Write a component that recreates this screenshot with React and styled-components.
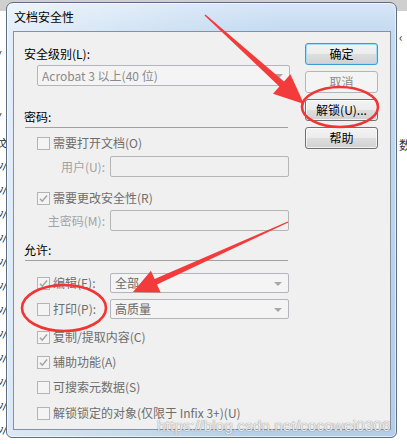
import React from "react";
import styled, { createGlobalStyle } from "styled-components";

const Global = createGlobalStyle`
  html, body { margin: 0; padding: 0; }
  body {
    background: linear-gradient(#cfcfcf 0, #cfcfcf 11px, #ffffff 11px);
    font-family: "Noto Sans CJK SC", "Liberation Sans", sans-serif;
    font-size: 12px;
    color: #000;
  }
`;

const Page = styled.div`
  position: relative;
  width: 407px;
  height: 444px;
  overflow: hidden;
  padding: 2px 0 0 6px;
  box-sizing: border-box;
`;

const Backdrop = styled.div`
  position: absolute;
  left: -3px;
  top: 0;
  width: 10px;
  height: 444px;
  font-family: "DejaVu Serif", serif;
  font-style: italic;
  font-size: 11px;
  color: #222;
`;

const Frag = styled.span`
  position: absolute;
  left: 0;
  line-height: 12px;
`;

const RightFrag = styled.span`
  position: absolute;
  left: 399px;
  top: ${(p) => p.$top}px;
  font-size: 12px;
  color: #333;
  line-height: 14px;
`;

const Window = styled.div`
  position: relative;
  width: 391px;
  height: 436px;
  box-sizing: border-box;
  border: 1px solid #5e6d80;
  border-radius: 7px 7px 6px 6px;
  padding: 0 5px 7px 6px;
  background:
    linear-gradient(90deg, rgba(255, 255, 255, 0.55) 0, rgba(255, 255, 255, 0.15) 45%, rgba(255, 255, 255, 0) 70%),
    linear-gradient(180deg, #d7e6f6 0, #c4dbf2 28px, #b9d3ee 60%, #b3cdea 100%);
  box-shadow: inset 0 0 0 1px rgba(255, 255, 255, 0.6);
  display: flex;
  flex-direction: column;
`;

const TitleBar = styled.div`
  height: 28px;
  display: flex;
  align-items: center;
  padding-left: 1px;
  font-size: 12px;
  color: #000;
  line-height: 16px;
  padding-bottom: 1px;
  box-sizing: border-box;
`;

const Client = styled.div`
  flex: 1;
  border: 1px solid #8591a0;
  background: #f0f0f0;
  display: flex;
  align-items: flex-start;
  padding: 11px 12px 0 10px;
  gap: 15px;
`;

const LeftCol = styled.div`
  width: 266px;
  margin-top: 3px;
  display: flex;
  flex-direction: column;
`;

const RightCol = styled.div`
  width: 73px;
  display: flex;
  flex-direction: column;
  gap: 6px;
`;

const Label = styled.div`
  height: 16px;
  line-height: 16px;
  margin-top: ${(p) => p.$mt || 0}px;
  color: #000;
  white-space: nowrap;
`;

const Separator = styled.div`
  height: 1px;
  width: 263px;
  margin: ${(p) => p.$mt}px 0 0 1px;
  background: #a0a0a0;
`;

const ComboBox = styled.div`
  height: ${(p) => p.$h || 21}px;
  width: ${(p) => p.$w}px;
  margin: ${(p) => p.$mt || 0}px 0 0 ${(p) => p.$ml || 0}px;
  box-sizing: border-box;
  border: 1px solid #b2b6ba;
  border-radius: 2px;
  background: #f4f4f4;
  display: flex;
  align-items: center;
  padding: 0 6px 0 4px;
  color: ${(p) => p.$color || "#8a8a8a"};
  line-height: 16px;
  white-space: nowrap;
`;

const ComboText = styled.span`
  flex: 1;
`;

const Arrow = styled.span`
  width: 0;
  height: 0;
  border-left: 4px solid transparent;
  border-right: 4px solid transparent;
  border-top: 4px solid #a8a8a8;
  margin-top: 1px;
`;

const CheckRow = styled.div`
  height: 16px;
  margin: ${(p) => p.$mt || 0}px 0 0 13px;
  display: flex;
  align-items: center;
  gap: 3px;
  color: #6d6d6d;
  line-height: 16px;
  white-space: nowrap;
`;

const Box = styled.span`
  width: 13px;
  height: 13px;
  box-sizing: border-box;
  border: 1px solid #b4b4b4;
  background: #f4f4f4;
  display: inline-flex;
  align-items: center;
  justify-content: center;
  flex: none;
`;

const FieldRow = styled.div`
  height: ${(p) => p.$h || 21}px;
  margin: ${(p) => p.$mt || 0}px 0 0 13px;
  display: flex;
  align-items: center;
`;

const Lead = styled.div`
  width: 73px;
  display: flex;
  align-items: center;
  justify-content: ${(p) => (p.$right ? "flex-end" : "flex-start")};
  padding-right: ${(p) => (p.$right ? 5 : 0)}px;
  box-sizing: border-box;
  gap: 3px;
  color: ${(p) => (p.$right ? "#a3a3a3" : "#6d6d6d")};
  line-height: 16px;
  white-space: nowrap;
`;

const Input = styled.div`
  width: 179px;
  height: 100%;
  box-sizing: border-box;
  border: 1px solid #b5b5b5;
  border-radius: 2px;
  background: #f0f0f0;
`;

const Button = styled.div`
  height: 22px;
  box-sizing: border-box;
  border-radius: 3px;
  display: flex;
  align-items: center;
  justify-content: center;
  line-height: 16px;
  font-size: 12px;
  border: 1px solid ${(p) => (p.$variant === "default" ? "#3b9ad8" : p.$variant === "disabled" ? "#b3b7ba" : "#707070")};
  color: ${(p) => (p.$variant === "disabled" ? "#8b8b8b" : "#000")};
  background: ${(p) =>
    p.$variant === "disabled"
      ? "#f4f4f4"
      : "linear-gradient(180deg, #f3f3f3 0, #ececec 48%, #dedede 52%, #d1d1d1 100%)"};
  box-shadow: ${(p) =>
    p.$variant === "default"
      ? "inset 0 0 0 1px #9fdcf8"
      : p.$variant === "disabled"
      ? "none"
      : "inset 0 0 0 1px rgba(255,255,255,0.7)"};
`;

const Overlay = styled.svg`
  position: absolute;
  left: 0;
  top: 0;
  width: 407px;
  height: 444px;
  pointer-events: none;
`;

const Watermark = styled.div`
  position: absolute;
  left: 157px;
  top: 417px;
  font-family: "Liberation Sans", Arial, sans-serif;
  font-size: 15.5px;
  line-height: 18px;
  color: rgba(255, 255, 255, 0.85);
  text-shadow: 0 0 1px rgba(80, 80, 80, 0.55), 0 0 1px rgba(80, 80, 80, 0.4);
  white-space: nowrap;
  pointer-events: none;
`;

const Check = () => (
  <svg width="11" height="11" viewBox="0 0 11 11">
    <path d="M2 5.8 L4.3 8.2 L9 2.6" fill="none" stroke="#a3a3a3" strokeWidth="1.5" />
  </svg>
);

const CheckBox = ({ checked }) => <Box>{checked ? <Check /> : null}</Box>;

const fragTops = [50, 112, 138, 160, 184, 208, 232, 256, 280, 304, 328, 352, 376, 400, 424];

export default function App() {
  return (
    <>
      <Global />
      <Page>
        <Backdrop>
          {fragTops.map((t, i) => (
            <Frag key={i} style={{ top: t }}>
              {i < 2 ? "/" : i === 2 ? "文" : "v/"}
            </Frag>
          ))}
        </Backdrop>
        <RightFrag $top={30}>‹</RightFrag>
        <RightFrag $top={138}>数</RightFrag>

        <Window>
          <TitleBar>文档安全性</TitleBar>
          <Client>
            <LeftCol>
              <Label>安全级别(L):</Label>
              <ComboBox $w={253} $ml={13} $mt={3}>
                <ComboText>Acrobat 3 以上(40 位)</ComboText>
                <Arrow />
              </ComboBox>

              <Label $mt={23}>密码:</Label>
              <Separator $mt={2} />
              <CheckRow $mt={7}>
                <CheckBox />
                需要打开文档(O)
              </CheckRow>
              <FieldRow $mt={5}>
                <Lead $right>用户(U):</Lead>
                <Input />
              </FieldRow>
              <CheckRow $mt={13}>
                <CheckBox checked />
                需要更改安全性(R)
              </CheckRow>
              <FieldRow $mt={4}>
                <Lead $right>主密码(M):</Lead>
                <Input />
              </FieldRow>

              <Label $mt={11}>允许:</Label>
              <Separator $mt={2} />
              <FieldRow $mt={12} $h={20}>
                <Lead>
                  <CheckBox checked />
                  编辑(E):
                </Lead>
                <ComboBox $w={179} $h={20} $color="#6a6a6a">
                  <ComboText>全部</ComboText>
                  <Arrow />
                </ComboBox>
              </FieldRow>
              <FieldRow $mt={6} $h={20}>
                <Lead>
                  <CheckBox />
                  打印(P):
                </Lead>
                <ComboBox $w={179} $h={20} $color="#6a6a6a">
                  <ComboText>高质量</ComboText>
                  <Arrow />
                </ComboBox>
              </FieldRow>
              <CheckRow $mt={10}>
                <CheckBox checked />
                复制/提取内容(C)
              </CheckRow>
              <CheckRow $mt={9}>
                <CheckBox checked />
                辅助功能(A)
              </CheckRow>
              <CheckRow $mt={9}>
                <CheckBox />
                可搜索元数据(S)
              </CheckRow>
              <CheckRow $mt={10}>
                <CheckBox />
                解锁锁定的对象(仅限于 Infix 3+)(U)
              </CheckRow>
            </LeftCol>
            <RightCol>
              <Button $variant="default">确定</Button>
              <Button $variant="disabled">取消</Button>
              <Button>解锁(U)...</Button>
              <Button>帮助</Button>
            </RightCol>
          </Client>
        </Window>

        <Watermark>https://blog.csdn.net/cocowei0306</Watermark>

        <Overlay viewBox="0 0 407 444">
          <polygon
            fill="#f43b3b"
            points="205.5,14.5 284,81.4 290.4,74.3 304,104 273,93.7 279.4,86.6 204.5,15.5"
          />
          <polygon
            fill="#f43b3b"
            points="287.7,221.4 154.6,279 150.9,270.8 133,292 160.7,292.6 157,284.4 288.3,222.6"
          />
          <ellipse cx="340" cy="107" rx="38" ry="20" fill="none" stroke="#f03535" strokeWidth="2.6" />
          <ellipse cx="64" cy="308" rx="42" ry="23" fill="none" stroke="#f03535" strokeWidth="2.6" />
        </Overlay>
      </Page>
    </>
  );
}
